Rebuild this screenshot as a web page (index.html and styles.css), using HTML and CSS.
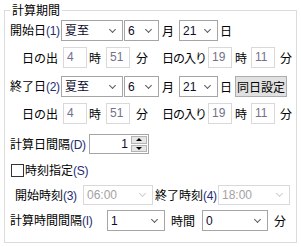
FILE: index.html
```html
<!DOCTYPE html>
<html lang="ja">
<head>
    <meta charset="UTF-8">
    <title>計算期間</title>
    <link rel="stylesheet" href="styles.css">
</head>
<body>
    <fieldset class="group">
        <legend>計算期間</legend>

        <div class="row r1">
            <span class="label w-date">開始日<span class="key">(1)</span></span>
            <div class="combo c-name"><span>夏至</span></div>
            <div class="combo c-month"><span>6</span></div>
            <span class="label u-month">月</span>
            <div class="combo c-day"><span>21</span></div>
            <span class="label u-day">日</span>
        </div>

        <div class="row r2">
            <span class="label w-sun">日の出</span>
            <div class="box">4</div>
            <span class="label u-h1">時</span>
            <div class="box">51</div>
            <span class="label u-m1">分</span>
            <span class="label w-set">日の入り</span>
            <div class="box">19</div>
            <span class="label u-h2">時</span>
            <div class="box">11</div>
            <span class="label u-m2">分</span>
        </div>

        <div class="row r3">
            <span class="label w-date">終了日<span class="key">(2)</span></span>
            <div class="combo c-name"><span>夏至</span></div>
            <div class="combo c-month"><span>6</span></div>
            <span class="label u-month">月</span>
            <div class="combo c-day"><span>21</span></div>
            <span class="label u-day">日</span>
            <button class="btn">同日設定</button>
        </div>

        <div class="row r4">
            <span class="label w-sun">日の出</span>
            <div class="box">4</div>
            <span class="label u-h1">時</span>
            <div class="box">51</div>
            <span class="label u-m1">分</span>
            <span class="label w-set">日の入り</span>
            <div class="box">19</div>
            <span class="label u-h2">時</span>
            <div class="box">11</div>
            <span class="label u-m2">分</span>
        </div>

        <div class="row r5">
            <span class="label w-int">計算日間隔<span class="key">(D)</span></span>
            <div class="spin">
                <span class="spin-val">1</span>
                <div class="spin-btns">
                    <span class="spin-btn up"></span>
                    <span class="spin-btn down"></span>
                </div>
            </div>
        </div>

        <div class="row r6">
            <span class="check"></span>
            <span class="label">時刻指定<span class="key">(S)</span></span>
        </div>

        <div class="row r7">
            <span class="label w-st">開始時刻<span class="key">(3)</span></span>
            <div class="combo off c-time"><span>06:00</span></div>
            <span class="label w-et">終了時刻<span class="key">(4)</span></span>
            <div class="combo off c-time2"><span>18:00</span></div>
        </div>

        <div class="row r8">
            <span class="label w-step">計算時間間隔<span class="key">(I)</span></span>
            <div class="combo c-hour"><span>1</span></div>
            <span class="label u-hour">時間</span>
            <div class="combo c-min"><span>0</span></div>
            <span class="label u-min">分</span>
        </div>
    </fieldset>
</body>
</html>
```

FILE: styles.css
```css
* {
    box-sizing: border-box;
}
body {
    margin: 0;
    background-color: #fff;
    font-family: "Noto Sans CJK JP", "Noto Sans", sans-serif;
    font-size: 12px;
    color: #000;
}
.group {
    margin: 1px 0 0 4px;
    padding: 0 5px 11px 5px;
    width: 293px;
    min-width: 0;
    border: 1px solid #dcdcdc;
}
.group legend {
    padding: 0 2px;
    line-height: 18px;
}
.row {
    display: flex;
    align-items: center;
}
.r1 { height: 21px; margin-top: 1px; }
.r2 { height: 21px; margin-top: 6px; }
.r3 { height: 21px; margin-top: 8px; }
.r4 { height: 21px; margin-top: 6px; }
.r5 { height: 20px; margin-top: 10px; }
.r6 { height: 14px; margin-top: 9px; }
.r7 { height: 20px; margin-top: 8px; }
.r8 { height: 21px; margin-top: 5px; }

.label {
    flex: none;
    line-height: 16px;
    white-space: nowrap;
}
.key {
    font-family: "Liberation Sans", sans-serif;
    font-size: 12px;
    letter-spacing: -0.3px;
    color: #1f2c74;
}

/* combo boxes */
.combo {
    flex: none;
    display: flex;
    align-items: center;
    height: 21px;
    padding-left: 3px;
    border: 1px solid #a5a5a5;
    background-color: #fff;
    font-family: "Liberation Sans", "Noto Sans CJK JP", sans-serif;
    color: #0c0c2c;
    line-height: 16px;
}
.combo::after {
    content: "";
    flex: none;
    width: 4px;
    height: 4px;
    margin: -3px 7px 0 auto;
    border-right: 1.5px solid #5c5c5c;
    border-bottom: 1.5px solid #5c5c5c;
    transform: rotate(45deg);
}
.combo.off {
    height: 20px;
    border-color: #d9d9d9;
    color: #a3a3a3;
}
.combo.off::after {
    border-color: #cfcfcf;
}
.c-name { width: 62px; }
.c-month { width: 35px; margin-left: 1px; }
.c-day { width: 39px; }
.c-time { width: 70px; }
.c-time2 { width: 72px; }
.c-hour { width: 58px; }
.c-min { width: 66px; }

/* read-only text boxes */
.box {
    flex: none;
    width: 24px;
    height: 21px;
    padding-left: 3px;
    border: 1px solid #d9d9d9;
    font-family: "Liberation Sans", sans-serif;
    line-height: 19px;
    color: #72728a;
}

.w-date { width: 51px; }
.u-month { width: 20px; padding-left: 3px; }
.u-day { width: 17px; padding-left: 2px; }
.w-sun { width: 53px; padding-left: 12px; }
.u-h1 { width: 19px; padding-left: 2px; }
.u-m1 { width: 30px; padding-left: 6px; }
.w-set { width: 48px; padding-left: 2px; letter-spacing: -1px; }
.u-h2 { width: 19px; padding-left: 3px; }
.u-m2 { padding-left: 5px; }
.w-int { width: 79px; }
.w-st { width: 73px; padding-left: 5px; }
.w-et { width: 65px; padding-left: 2px; }
.w-step { width: 97px; }
.u-hour { width: 37px; padding-left: 6px; }
.u-min { padding-left: 6px; }

.btn {
    flex: none;
    width: 52px;
    height: 21px;
    padding: 0;
    border: 1px solid #adadad;
    background-color: #e1e1e1;
    font-family: inherit;
    font-size: 12px;
    line-height: 16px;
    color: #000;
}

/* numeric up-down */
.spin {
    flex: none;
    display: flex;
    width: 60px;
    height: 20px;
    border: 1px solid #a5a5a5;
}
.spin-val {
    flex: 1;
    padding-right: 3px;
    text-align: right;
    font-family: "Liberation Sans", sans-serif;
    line-height: 18px;
    color: #0c0c2c;
}
.spin-btns {
    display: flex;
    flex-direction: column;
    gap: 1px;
    width: 17px;
    padding: 1px 1px 1px 0;
}
.spin-btn {
    flex: 1;
    display: flex;
    align-items: center;
    justify-content: center;
    border: 1px solid #b4b4b4;
    background-color: #e6e6e6;
}
.spin-btn::before {
    content: "";
    border-left: 3px solid transparent;
    border-right: 3px solid transparent;
}
.spin-btn.up::before { border-bottom: 3px solid #000; }
.spin-btn.down::before { border-top: 3px solid #000; }

.check {
    flex: none;
    width: 13px;
    height: 13px;
    margin: 0 1px 0 1px;
    border: 1px solid #333;
    background-color: #fff;
}
```
